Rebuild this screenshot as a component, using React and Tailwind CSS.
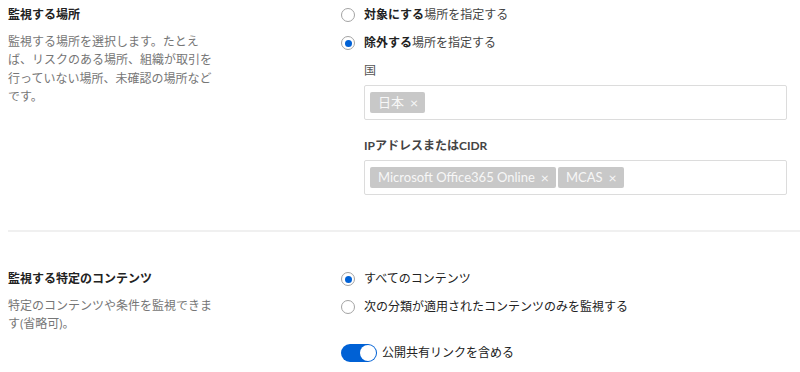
import React from "react";

const font = { fontFamily: 'Lato, "Noto Sans CJK JP", sans-serif' };

function Radio({ checked, children }) {
  return (
    <div className="flex items-center h-[18px]">
      <span className="w-[14px] h-[14px] rounded-full border border-[#a3a3a3] bg-white flex items-center justify-center shrink-0">
        {checked && <span className="w-[7px] h-[7px] rounded-full bg-[#0061d5]" />}
      </span>
      <span className="ml-[9px] text-[12px] leading-[18px] text-[#222]">{children}</span>
    </div>
  );
}

function Chip({ children }) {
  return (
    <span className="h-[21px] flex items-center bg-[#c8c8c8] rounded-[2px] pl-[8px] pr-[7px] text-[13px] text-[#f7f7f7]">
      <span>{children}</span>
      <span className="ml-[6px] text-[14px] leading-none">×</span>
    </span>
  );
}

function TagBox({ children }) {
  return (
    <div className="mt-[5px] h-[35px] border border-[#dcdcdc] rounded-[2px] flex items-center gap-[2px] px-[5px]">
      {children}
    </div>
  );
}

export default function App() {
  return (
    <div className="w-[800px] h-[372px] bg-white overflow-hidden" style={font}>
      <section className="flex pl-2 pt-[6px] h-[230px]">
        <div className="w-[333px]">
          <div className="text-[12px] leading-[18px] font-bold text-[#222]">監視する場所</div>
          <p className="mt-[9px] w-[212px] text-[12px] leading-[18.3px] text-[#767676]">
            監視する場所を選択します。たとえば、リスクのある場所、組織が取引を行っていない場所、未確認の場所などです。
          </p>
        </div>
        <div className="flex-1 pr-[13px]">
          <div className="flex flex-col gap-[10px]">
            <Radio>
              <b>対象にする</b>
              <span className="text-[#444]">場所を指定する</span>
            </Radio>
            <Radio checked>
              <b>除外する</b>
              <span className="text-[#444]">場所を指定する</span>
            </Radio>
          </div>
          <div className="ml-[23px] mt-[10px]">
            <div className="text-[12px] leading-[18px] text-[#555]">国</div>
            <TagBox>
              <Chip>日本</Chip>
            </TagBox>
            <div className="mt-[17px] text-[12px] leading-[18px] font-bold text-[#444]">IPアドレスまたはCIDR</div>
            <TagBox>
              <Chip>Microsoft Office365 Online</Chip>
              <Chip>MCAS</Chip>
            </TagBox>
          </div>
        </div>
      </section>
      <div className="ml-2 h-[2px] bg-[#f0f0f0]" />
      <section className="flex pl-2 pt-[38px]">
        <div className="w-[333px]">
          <div className="text-[12px] leading-[18px] font-bold text-[#222]">監視する特定のコンテンツ</div>
          <p className="mt-[9px] w-[212px] text-[12px] leading-[18px] text-[#767676]">
            特定のコンテンツや条件を監視できます(省略可)。
          </p>
        </div>
        <div className="flex-1">
          <div className="flex flex-col gap-[10px]">
            <Radio checked>すべてのコンテンツ</Radio>
            <Radio>次の分類が適用されたコンテンツのみを監視する</Radio>
          </div>
          <div className="mt-[28px] flex items-center">
            <span className="w-[36px] h-[18px] rounded-full bg-[#0061d5] flex items-center justify-end pr-[1px]">
              <span className="w-[16px] h-[16px] rounded-full bg-white" />
            </span>
            <span className="ml-[5px] text-[12px] leading-[18px] text-[#222]">公開共有リンクを含める</span>
          </div>
        </div>
      </section>
    </div>
  );
}
